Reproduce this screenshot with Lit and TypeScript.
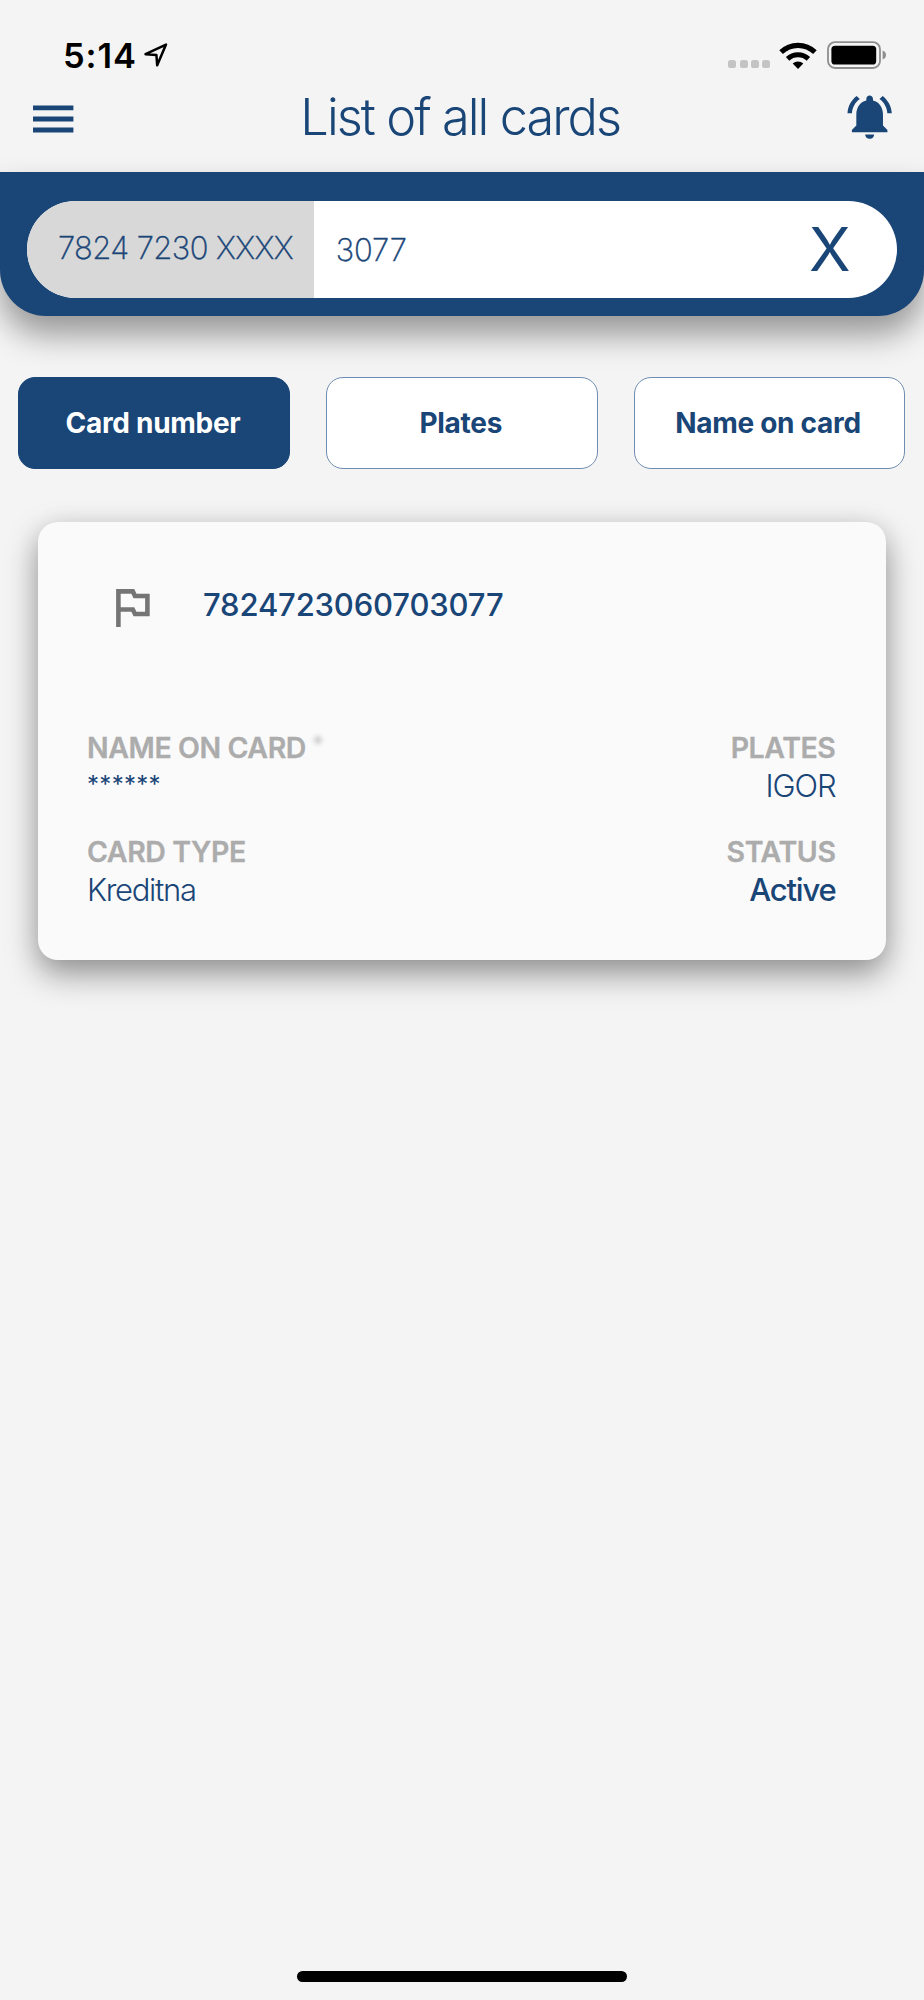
import { LitElement, html, css } from "lit";
import { customElement, property, state } from "lit/decorators.js";
import { classMap } from "lit/directives/class-map.js";

@customElement("status-bar")
class StatusBar extends LitElement {
  static styles = css`
    :host { display: flex; align-items: center; height: 41px; padding: 35px 37.5px 0 63px; color: #000; }
    .time { font-size: 34.5px; font-weight: 600; line-height: 41px; letter-spacing: 0.9px; width: 73px; white-space: nowrap; }
    .arrow { width: 24px; height: 24px; margin: -1px 0 0 7.5px; }
    .spacer { flex: 1; }
    .dots { display: flex; gap: 3.2px; padding-top: 16.5px; }
    .dot { width: 8px; height: 8px; border-radius: 2.6px; background: #c4c4c4; }
    .wifi { width: 38px; height: 27px; margin: -1px 0 0 9px; }
    .battery { width: 60px; height: 28px; margin: -1px 0 0 9.5px; }
  `;
  render() {
    return html`
      <span class="time">5:14</span>
      <svg class="arrow" viewBox="0 0 24 24"><path d="M1.5 11.2 L22 1.6 L13.2 22.3 L12.4 12 Z" fill="none" stroke="#000" stroke-width="2.5" stroke-linejoin="round"/></svg>
      <span class="spacer"></span>
      <span class="dots">${[0, 1, 2, 3].map(() => html`<i class="dot"></i>`)}</span>
      <svg class="wifi" viewBox="0 0 38 27">
        <g fill="none" stroke="#000">
          <path d="M2.1 10.2 A24.2 24.2 0 0 1 35.9 10.2" stroke-width="5.2"/>
          <path d="M8.6 16.9 A15 15 0 0 1 29.4 16.9" stroke-width="5"/>
        </g>
        <path d="M19 27 L13.7 21.6 A7.6 7.6 0 0 1 24.3 21.6 Z"/>
      </svg>
      <svg class="battery" viewBox="0 0 60 28">
        <rect x="1" y="1.2" width="52" height="25.8" rx="7" fill="none" stroke="#8e8e8e" stroke-width="1.8"/>
        <rect x="4.4" y="4.7" width="44.8" height="18.8" rx="3.6"/>
        <path d="M55.6 9.6 Q59 11 59 14.1 Q59 17.2 55.6 18.6 Z" fill="#8e8e8e"/>
      </svg>`;
  }
}

@customElement("page-header")
class PageHeader extends LitElement {
  @property() heading = "";
  static styles = css`
    :host { display: grid; grid-template-columns: 60px 1fr 60px; align-items: center; height: 81px; padding: 0 27.5px 15px 24px; color: #194577; }
    .menu { width: 41px; height: 28px; margin-left: 9px; fill: currentColor; margin-top: 4.5px; }
    h1 { margin: 1px 0 0; text-align: center; font-size: 50.5px; font-weight: 300; line-height: 60px; letter-spacing: -1.95px; white-space: nowrap; }
    .bell { width: 53.3px; height: 53.3px; fill: currentColor; }
    .right { display: flex; justify-content: flex-end; }
  `;
  render() {
    return html`
      <svg class="menu" viewBox="0 0 41 28"><path d="M0 .4h40.4v4.9H0zM0 11.5h40.4v4.9H0zM0 22.5h40.4v4.9H0z"/></svg>
      <h1>${this.heading}</h1>
      <span class="right">
        <svg class="bell" viewBox="0 0 24 24"><path d="M7.58 4.08L6.15 2.65C3.75 4.48 2.17 7.3 2.03 10.5h2c.15-2.65 1.51-4.97 3.55-6.42zm12.39 6.42h2c-.15-3.2-1.73-6.02-4.12-7.85l-1.42 1.43c2.02 1.45 3.39 3.77 3.54 6.42zM18 11c0-3.07-1.64-5.64-4.5-6.32V4c0-.83-.67-1.5-1.5-1.5s-1.5.67-1.5 1.5v.68C7.63 5.36 6 7.92 6 11v5l-2 2v1h16v-1l-2-2v-5zm-6 11c.14 0 .27-.01.4-.04.65-.14 1.18-.58 1.44-1.18.1-.24.15-.5.15-.78h-4c.01 1.1.9 2 2.01 2z"/></svg>
      </span>`;
  }
}

@customElement("card-search")
class CardSearch extends LitElement {
  @property() prefix = "";
  @property() value = "";
  static styles = css`
    :host { display: block; height: 97px; padding: 29px 27px 17.5px; background: #194577; border-radius: 0 0 46px 46px; box-shadow: 0 19px 32px rgba(0, 0, 0, 0.38); color: #194577; }
    .pill { display: flex; align-items: center; height: 97px; border-radius: 48.5px; background: #fff; overflow: hidden; }
    .prefix { box-sizing: border-box; width: 286.7px; height: 97px; padding-left: 31px; background: #d8d8d8; line-height: 94px; }
    .prefix, .value { font-size: 31px; font-weight: 200; white-space: nowrap; -webkit-text-stroke: 0.4px #194577; }
    .prefix { letter-spacing: -0.6px; }
    .value { flex: 1; padding-left: 22px; line-height: 94px; letter-spacing: -0.1px; }
    .clear { width: 37.5px; margin-right: 48.5px; display: flex; justify-content: center; font-size: 61px; line-height: 97px; font-weight: 400; }
  `;
  render() {
    return html`
      <div class="pill">
        <span class="prefix">${this.prefix}</span>
        <span class="value">${this.value}</span>
        <span class="clear">X</span>
      </div>`;
  }
}

@customElement("filter-tabs")
class FilterTabs extends LitElement {
  @property({ type: Array }) items: string[] = [];
  @state() private active = 0;
  static styles = css`
    :host { display: grid; grid-template-columns: 272px 271.5px 271px; gap: 36px; padding: 61.5px 18px 0; }
    .tab { box-sizing: border-box; height: 92px; padding: 0 2px 0 0; font: 700 28px/90px Inter, sans-serif; letter-spacing: -0.3px; text-align: center; white-space: nowrap; color: #194577; background: #fff; border: 1px solid #6f8db0; border-radius: 17px; }
    .tab.active { color: #fff; background: #194577; border-color: #194577; }
  `;
  render() {
    return this.items.map((t, i) => html`<button class=${classMap({ tab: true, active: i === this.active })} @click=${() => (this.active = i)}>${t}</button>`);
  }
}

@customElement("fuel-card")
class FuelCard extends LitElement {
  static styles = css`
    :host { display: block; box-sizing: border-box; height: 438px; margin: 53px 38px 0 37.5px; padding: 53px 50.5px 0 49.5px; background: #fafafa; border-radius: 20px; box-shadow: 0 14px 32px rgba(0, 0, 0, 0.4), 0 0 24px rgba(0, 0, 0, 0.05); color: #194577; }
    .top { display: flex; align-items: center; height: 60px; }
    .flag { width: 34px; height: 38px; margin: 5px 0 0 28.5px; }
    .number { margin-left: 53.5px; font-size: 31px; font-weight: 500; letter-spacing: -0.16px; line-height: 60px; }
    .rows { display: flex; flex-direction: column; gap: 28px; padding-top: 93px; }
    .row { display: flex; justify-content: space-between; }
    .cell { display: flex; flex-direction: column; }
    .end { align-items: flex-end; }
    .label { display: flex; font-size: 28.5px; line-height: 40px; font-weight: 600; color: #acacac; white-space: nowrap; letter-spacing: -0.42px; -webkit-text-stroke: 0.3px #acacac; }
    .smudge { width: 8px; height: 8px; margin: 8px 0 0 8px; border-radius: 50%; background: #cfcfcf; filter: blur(2px); }
    .value { font-size: 31px; line-height: 36px; font-weight: 300; letter-spacing: -1.3px; white-space: nowrap; }
    .end .value { letter-spacing: -1.1px; }
    .stars { font-size: 24px; line-height: 33px; letter-spacing: 0.3px; font-weight: 400; }
    .end .strong { font-weight: 500; letter-spacing: -1.2px; }
  `;
  render() {
    return html`
      <div class="top">
        <svg class="flag" viewBox="0 0 34 38"><path d="M2.4 38 V2.4 H16.8 L19 7 H31.4 V25 H19 L16.8 20.5 H2.4" fill="none" stroke="#757575" stroke-width="4.6"/></svg>
        <span class="number">7824723060703077</span>
      </div>
      <div class="rows">
        <div class="row">
          <div class="cell"><span class="label">NAME ON CARD<i class="smudge"></i></span><span class="value stars">******</span></div>
          <div class="cell end"><span class="label">PLATES</span><span class="value">IGOR</span></div>
        </div>
        <div class="row">
          <div class="cell"><span class="label">CARD TYPE</span><span class="value">Kreditna</span></div>
          <div class="cell end"><span class="label">STATUS</span><span class="value strong">Active</span></div>
        </div>
      </div>`;
  }
}

@customElement("app-root")
class AppRoot extends LitElement {
  static styles = css`
    :host { display: flex; flex-direction: column; width: 924px; height: 2000px; overflow: hidden; background: #f4f4f4; font-family: Inter, "Noto Sans", sans-serif; }
    .spacer { flex: 1; }
    .home { align-self: center; width: 330px; height: 11.5px; margin-bottom: 18px; border-radius: 6px; background: #000; }
  `;
  render() {
    return html`
      <status-bar></status-bar>
      <page-header heading="List of all cards"></page-header>
      <card-search prefix="7824 7230 XXXX" value="3077"></card-search>
      <filter-tabs .items=${["Card number", "Plates", "Name on card"]}></filter-tabs>
      <fuel-card></fuel-card>
      <span class="spacer"></span>
      <span class="home"></span>`;
  }
}
